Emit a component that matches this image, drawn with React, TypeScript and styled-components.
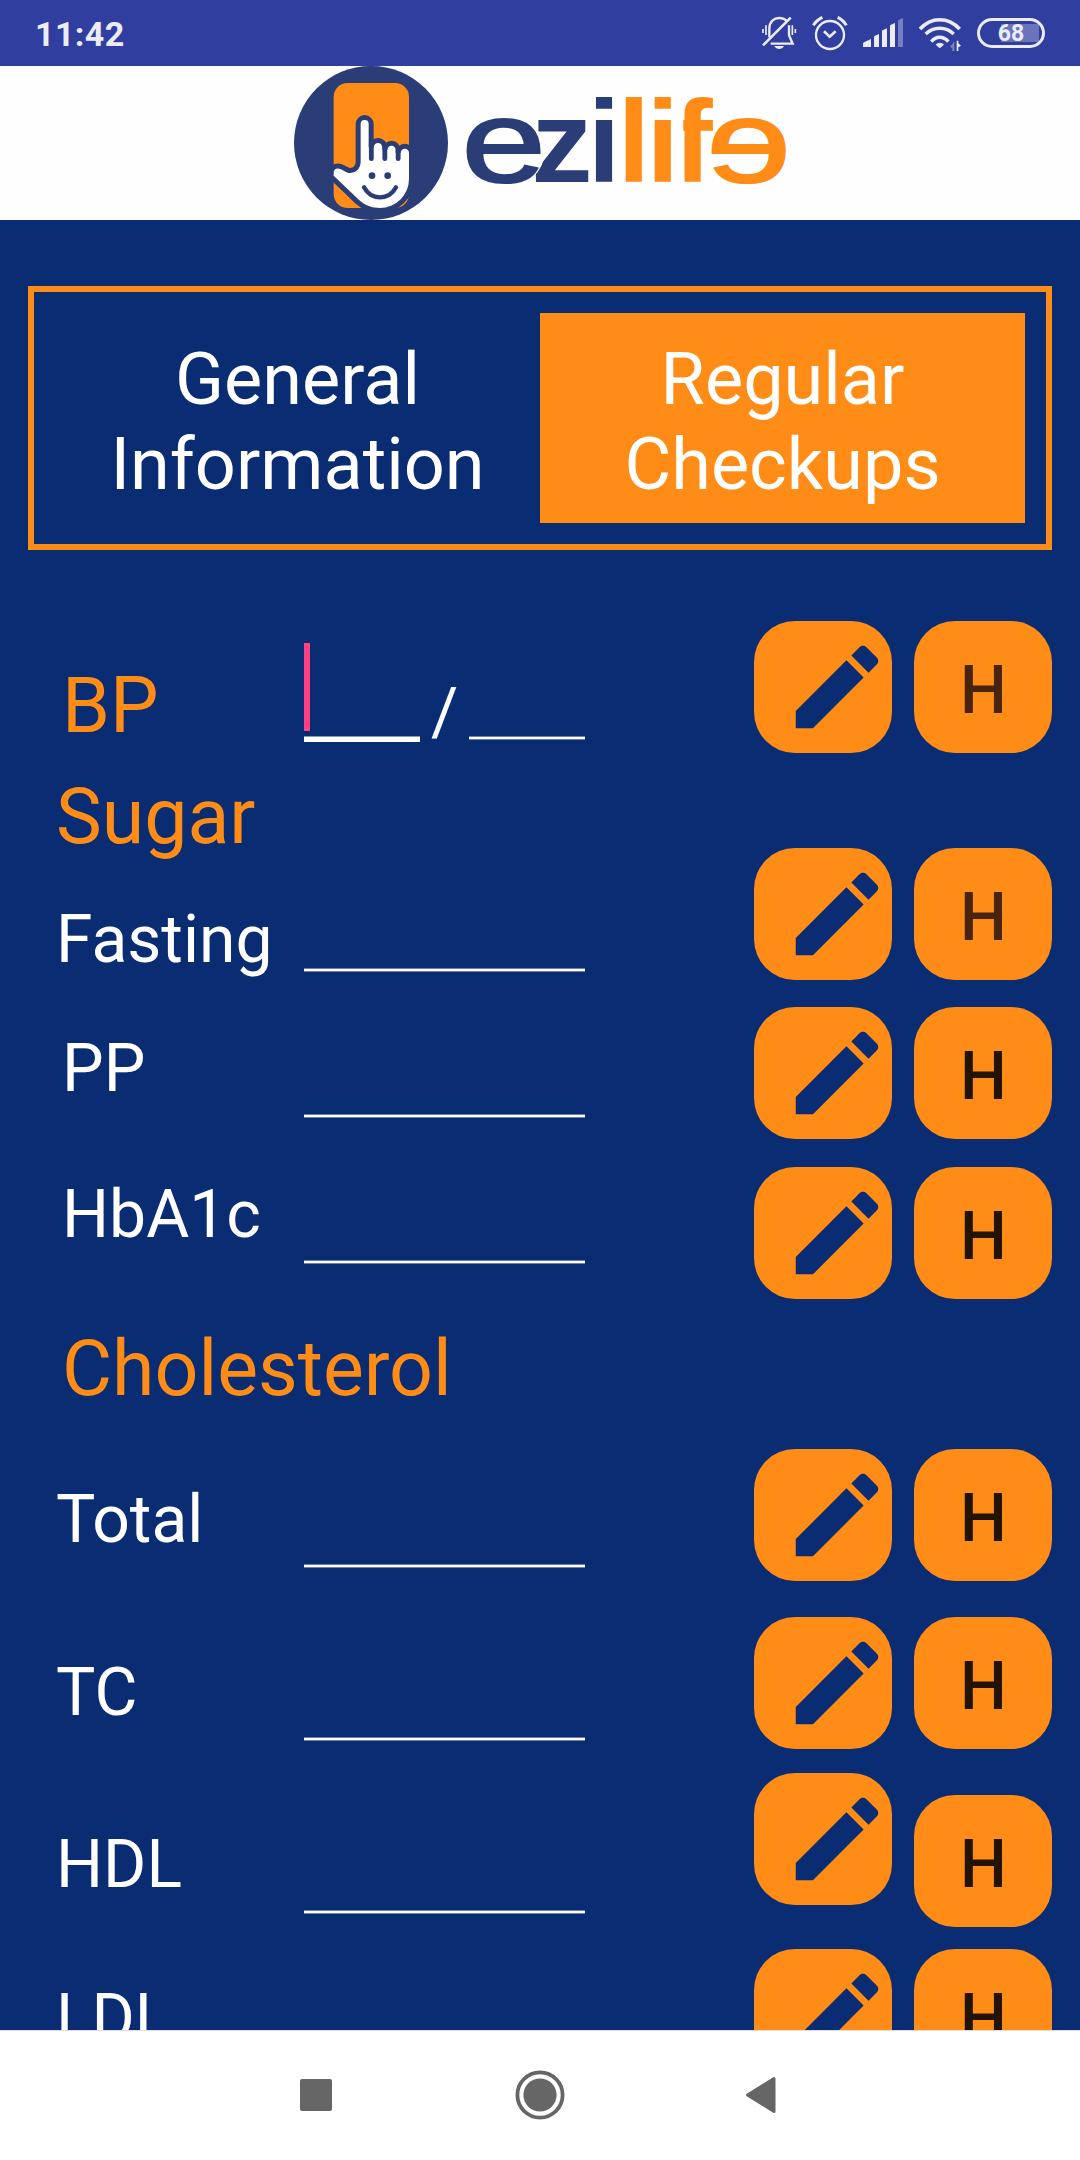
import React from 'react';
import styled, { createGlobalStyle } from 'styled-components';

const NAVY = '#0a2c72';
const ORANGE = '#ff8c16';
const LOGO_NAVY = '#2b3d76';
const STATUS_INK = '#ebecf6';

const GlobalStyle = createGlobalStyle`
  *, *::before, *::after { box-sizing: border-box; }
  html, body { margin: 0; padding: 0; background: #fff; }
  body { font-family: Roboto, 'Noto Sans', sans-serif; }
`;

const Screen = styled.div`
  display: flex;
  flex-direction: column;
  width: 1080px;
  height: 2160px;
  overflow: hidden;
`;

const StatusBar = styled.header`
  display: flex;
  align-items: center;
  justify-content: space-between;
  flex: none;
  height: 66px;
  padding: 0 35px;
  background: #303e9f;
  color: ${STATUS_INK};
`;

const Clock = styled.span`
  font-size: 34px;
  line-height: 40px;
  font-weight: 700;
  letter-spacing: 0.4px;
  padding-top: 2px;
`;

const StatusIcons = styled.div`
  display: flex;
  align-items: center;
  height: 66px;

  svg {
    display: block;
  }
`;

const StatusGlyph = styled.span<{ $gap: number }>`
  margin-right: ${(p) => p.$gap}px;
`;

const Battery = styled.div`
  display: flex;
  align-items: center;
  justify-content: center;
  width: 68px;
  height: 30px;
  border: 3px solid ${STATUS_INK};
  border-radius: 15px;
  padding-top: 1px;
  font-size: 23px;
  line-height: 24px;
  font-weight: 700;
  background: linear-gradient(rgba(255, 255, 255, 0.28), rgba(255, 255, 255, 0.28)) 21px 3px / 38px 18px no-repeat;
`;

const Brand = styled.div`
  display: flex;
  flex: none;
  justify-content: center;
  height: 154px;
  padding-left: 26px;
  background: #fefefe;

  svg {
    display: block;
  }
`;

const Content = styled.main`
  flex: 1;
  min-height: 0;
  overflow: hidden;
  padding-top: 66px;
  background: ${NAVY};
`;

const Tabs = styled.nav`
  display: flex;
  height: 264px;
  margin: 0 28px 71px;
  padding: 21px;
  border: 6px solid ${ORANGE};
`;

const Tab = styled.div<{ $active?: boolean }>`
  display: flex;
  flex: 1;
  align-items: center;
  justify-content: center;
  padding-top: 8px;
  background: ${(p) => (p.$active ? ORANGE : 'transparent')};
  color: #fff;
  font-size: 72px;
  line-height: 85px;
  text-align: center;
`;

const Row = styled.section<{ $height: number; $after: number }>`
  display: grid;
  grid-template-columns: 248px 281px 1fr;
  align-items: start;
  height: ${(p) => p.$height}px;
  margin-bottom: ${(p) => p.$after}px;
  padding: 0 28px 0 56px;
`;

const Label = styled.div<{ $drop: number; $indent?: boolean; $accent?: boolean }>`
  margin-top: ${(p) => p.$drop}px;
  padding-left: ${(p) => (p.$indent ? 6 : 0)}px;
  color: ${(p) => (p.$accent ? ORANGE : '#fff')};
  font-size: ${(p) => (p.$accent ? 77 : 66)}px;
  line-height: ${(p) => (p.$accent ? 90 : 78)}px;
  white-space: nowrap;
`;

const Heading = styled.h2<{ $height: number; $top: number; $indent?: boolean }>`
  height: ${(p) => p.$height}px;
  margin: 0;
  padding: ${(p) => p.$top}px 0 0 ${(p) => (p.$indent ? 62 : 56)}px;
  color: ${ORANGE};
  font-size: 77px;
  line-height: 90px;
  font-weight: 400;
`;

const Field = styled.div<{ $drop: number }>`
  height: 2px;
  margin-top: ${(p) => p.$drop}px;
  background: #fff;
  box-shadow: 0 -1px 0 rgba(255, 255, 255, 0.4), 0 1px 0 rgba(255, 255, 255, 0.4);
`;

const Pair = styled.div`
  display: grid;
  grid-template-columns: 116px 49px 116px;
  align-items: start;
`;

const FocusedField = styled.div`
  height: 121px;
  padding-top: 22px;
  border-bottom: 5px solid #fff;
  box-shadow: inset 0 -1px 0 rgba(255, 255, 255, 0.5);
`;

const Caret = styled.div`
  width: 6px;
  height: 88px;
  background: #ff4081;
`;

const Slash = styled.div`
  margin-top: 53px;
  color: #fff;
  font-size: 66px;
  line-height: 78px;
  text-align: center;
`;

const Actions = styled.div`
  display: flex;
  align-items: flex-start;
  justify-content: flex-end;
  gap: 22px;
`;

const ActionButton = styled.button<{ $kind: 'edit' | 'history'; $faded?: boolean; $drop?: number }>`
  display: flex;
  align-items: center;
  justify-content: ${(p) => (p.$kind === 'edit' ? 'flex-end' : 'center')};
  width: 138px;
  height: 132px;
  margin: ${(p) => p.$drop ?? 0}px 0 0;
  padding: ${(p) => (p.$kind === 'edit' ? '0' : '8px 0 0 1px')};
  border: 0;
  border-radius: 41px;
  background: ${ORANGE};
  color: ${(p) => (p.$faded ? '#48230e' : '#231303')};
  font-family: Roboto, sans-serif;
  font-size: 66px;
  line-height: 78px;
  font-weight: 500;

  svg {
    display: block;
  }
`;

const NavBar = styled.footer`
  display: flex;
  flex: none;
  align-items: center;
  justify-content: center;
  height: 130px;
  border-top: 1px solid #dedede;
  padding: 0 7px 1px 0;
  background: #fff;
`;

const NavItem = styled.div<{ $width: number }>`
  display: flex;
  flex: none;
  justify-content: center;
  width: ${(p) => p.$width}px;
`;

const BellOffIcon = () => (
  <svg width="36" height="36" viewBox="63 45 108 108" fill="none" stroke={STATUS_INK} strokeWidth="7">
    <path d="M88 112V86C88 64 103 54 117 54C129 54 137 59 142 65" />
    <path d="M147 76V106L158 131H92" />
    <path d="M69 136L152 53" strokeWidth="8" />
    <path d="M103 138H132Q127 147 117.500 147Q108 147 103 138Z" fill={STATUS_INK} stroke="none" />
    <path d="M69 87V99M78 76V105M157 76V105M166 87V99" strokeWidth="5" />
  </svg>
);

const AlarmIcon = () => (
  <svg width="36" height="36" viewBox="216 45 108 108" fill="none" stroke={STATUS_INK} strokeWidth="7">
    <circle cx="270" cy="105" r="42" />
    <path d="M252 94L269 110L287 94" strokeWidth="8" />
    <path d="M220 76Q229 61 247 52M293 52Q311 61 319 76" strokeWidth="9" />
  </svg>
);

const SignalIcon = () => (
  <svg width="42" height="36" viewBox="366 45 126 108" fill={STATUS_INK}>
    <path d="M369 141V132Q369 129 372 127L393 117V141Z" />
    <path d="M402 141V111Q402 108 405 107L417 102V141Z" />
    <path d="M426 141V94Q426 91 429 90L441 85V141Z" />
    <path d="M450 141V78Q450 75 453 74L465 69V141Z" />
    <path d="M474 141V63Q474 60 477 59L489 54V141Z" opacity="0.38" />
  </svg>
);

const WifiIcon = () => (
  <svg width="45" height="36" viewBox="535 45 135 108" fill="none" stroke={STATUS_INK} strokeWidth="10.500">
    <path d="M541 87Q566 59 600 59Q635 59 660 87" />
    <path d="M558 102Q576 85 600 85Q625 85 642 102" />
    <path d="M575 125Q586 112 600 112Q615 112 626 125" />
    <path d="M588 133Q600 123 613 133Q610 139 600 145Q591 139 588 133Z" fill={STATUS_INK} stroke="none" />
    <path d="M644 123V153H638V144L631 141L638 132Z" fill={STATUS_INK} stroke="none" opacity="0.4" />
    <path d="M651 122H656V130L664 137L656 142V153H651Z" fill={STATUS_INK} stroke="none" />
  </svg>
);

const PencilIcon = () => (
  <svg width="110" height="110" viewBox="0 0 24 24" fill={NAVY}>
    <path d="M3 17.250V21h3.750L17.810 9.940l-3.750-3.750L3 17.250zM20.710 7.040c.39-.39.39-1.020 0-1.410l-2.340-2.340c-.39-.39-1.020-.39-1.410 0l-1.830 1.830 3.750 3.750 1.830-1.830z" />
  </svg>
);

const Letter = ({ ch, x, sx, fill, wide }: { ch: string; x: number; sx: number; fill: string; wide?: boolean }) => (
  <text
    transform={`translate(${x} 115.700) scale(${sx} 1)`}
    fill={fill}
    stroke={wide ? fill : 'none'}
    strokeWidth={wide ? 2.2 : 0}
    fontFamily="'Liberation Sans', sans-serif"
    fontSize="117.500"
    fontWeight={wide ? 400 : 700}
  >
    {ch}
  </text>
);

const Logo = () => (
  <svg width="520" height="154" viewBox="0 0 520 154">
    <defs>
      <clipPath id="stemEdge">
        <rect x="390.300" y="0" width="60" height="154" />
      </clipPath>
    </defs>
    <g transform="translate(-13 -6) scale(0.33333)">
      <circle cx="273" cy="249" r="231" fill={LOGO_NAVY} />
      <rect x="161" y="69" width="226" height="375" rx="42" fill={ORANGE} />
      <path
        d="M161 347V337C163 325 172 324 181 327C192 331 199 340 211 339C231 338 242 324 242 304V192A12 12 0 0 1 266 192V262H281A13 13 0 0 1 307 262V270H322A12.500 12.500 0 0 1 347 270V279H362A12.500 12.500 0 0 1 387 279V357A87 87 0 0 1 300 444C276 444 256 437 238 421Z"
        fill="#fefefe"
        stroke={LOGO_NAVY}
        strokeWidth="30"
        strokeLinejoin="round"
        paintOrder="stroke"
      />
      <g fill="none" stroke={LOGO_NAVY} strokeWidth="14.500" strokeLinecap="round">
        <path d="M274 250V296M314.500 258V296M354.500 268V296" />
        <path d="M252 382Q268 412 300 412Q332 412 348 382" strokeWidth="13" />
      </g>
      <circle cx="276" cy="347" r="10" fill={LOGO_NAVY} />
      <circle cx="323" cy="347" r="10" fill={LOGO_NAVY} />
    </g>
    <Letter ch="z" x={238} sx={1.05} fill={LOGO_NAVY} />
    <ellipse cx="210.700" cy="85.300" rx="41" ry="37" fill="#fefefe" />
    <Letter ch="e" x={168.5} sx={1.29} fill={LOGO_NAVY} wide />
    <Letter ch="i" x={294.7} sx={1} fill={LOGO_NAVY} />
    <Letter ch="l" x={324.6} sx={1} fill={ORANGE} />
    <Letter ch="i" x={353.5} sx={1} fill={ORANGE} />
    <g clipPath="url(#stemEdge)">
      <Letter ch="f" x={380.6} sx={1} fill={ORANGE} />
    </g>
    <ellipse cx="455.500" cy="85.300" rx="41" ry="37" fill="#fefefe" />
    <Letter ch="e" x={497.8} sx={-1.29} fill={ORANGE} wide />
  </svg>
);

type Entry = {
  name: string;
  drop: number;
  line: number;
  after: number;
  indent?: boolean;
  faded?: boolean;
  height?: number;
  historyDrop?: number;
};

const sugar: Entry[] = [
  { name: 'Fasting', drop: 53, line: 121, after: 27, faded: true },
  { name: 'PP', drop: 23, line: 108, after: 28, indent: true },
  { name: 'HbA1c', drop: 9, line: 94, after: 0, indent: true },
];

const cholesterol: Entry[] = [
  { name: 'Total', drop: 32, line: 116, after: 36 },
  { name: 'TC', drop: 37, line: 121, after: 24 },
  { name: 'HDL', drop: 53, line: 138, after: 22, height: 154, historyDrop: 22 },
  { name: 'LDL', drop: 31, line: 116, after: 0 },
];

const RowActions = ({ faded, historyDrop }: { faded?: boolean; historyDrop?: number }) => (
  <Actions>
    <ActionButton $kind="edit" aria-label="Edit">
      <PencilIcon />
    </ActionButton>
    <ActionButton $kind="history" $faded={faded} $drop={historyDrop}>
      H
    </ActionButton>
  </Actions>
);

const EntryRow = ({ entry }: { entry: Entry }) => (
  <Row $height={entry.height ?? 132} $after={entry.after}>
    <Label $drop={entry.drop} $indent={entry.indent}>
      {entry.name}
    </Label>
    <Field $drop={entry.line} />
    <RowActions faded={entry.faded} historyDrop={entry.historyDrop} />
  </Row>
);

export default function App() {
  return (
    <Screen>
      <GlobalStyle />
      <StatusBar>
        <Clock>11:42</Clock>
        <StatusIcons>
          <StatusGlyph $gap={15}>
            <BellOffIcon />
          </StatusGlyph>
          <StatusGlyph $gap={14}>
            <AlarmIcon />
          </StatusGlyph>
          <StatusGlyph $gap={14}>
            <SignalIcon />
          </StatusGlyph>
          <StatusGlyph $gap={14}>
            <WifiIcon />
          </StatusGlyph>
          <Battery>68</Battery>
        </StatusIcons>
      </StatusBar>
      <Brand>
        <Logo />
      </Brand>
      <Content>
        <Tabs>
          <Tab>
            General
            <br />
            Information
          </Tab>
          <Tab $active>
            Regular
            <br />
            Checkups
          </Tab>
        </Tabs>
        <Row $height={132} $after={0}>
          <Label $drop={40} $indent $accent>
            BP
          </Label>
          <Pair>
            <FocusedField>
              <Caret />
            </FocusedField>
            <Slash>/</Slash>
            <Field $drop={116} />
          </Pair>
          <RowActions faded />
        </Row>
        <Heading $height={95} $top={19}>
          Sugar
        </Heading>
        {sugar.map((entry) => (
          <EntryRow key={entry.name} entry={entry} />
        ))}
        <Heading $height={150} $top={25} $indent>
          Cholesterol
        </Heading>
        {cholesterol.map((entry) => (
          <EntryRow key={entry.name} entry={entry} />
        ))}
      </Content>
      <NavBar>
        <NavItem $width={225}>
          <svg width="32" height="32" viewBox="0 0 32 32">
            <rect width="32" height="32" rx="2" fill="#666" />
          </svg>
        </NavItem>
        <NavItem $width={223}>
          <svg width="50" height="50" viewBox="0 0 50 50">
            <circle cx="25" cy="25" r="22.600" fill="none" stroke="#666" strokeWidth="3.800" />
            <circle cx="25" cy="25" r="16.600" fill="#666" />
          </svg>
        </NavItem>
        <NavItem $width={218}>
          <svg width="32" height="38" viewBox="0 0 32 38">
            <path d="M29 2.500V35.500L2.500 19Z" fill="#666" stroke="#666" strokeWidth="3" strokeLinejoin="round" />
          </svg>
        </NavItem>
      </NavBar>
    </Screen>
  );
}
